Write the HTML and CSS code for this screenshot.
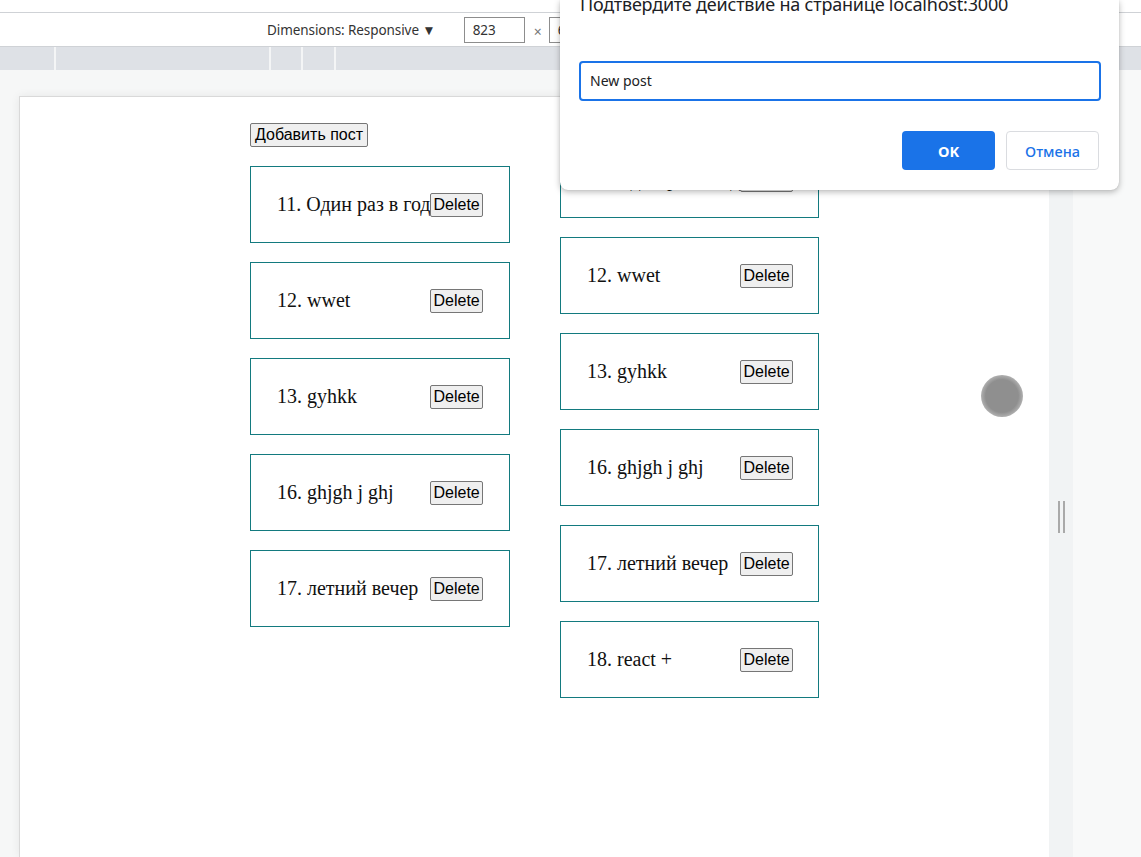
FILE: index.html
```html
<!DOCTYPE html>
<html lang="ru">
<head>
<meta charset="utf-8">
<title>Posts</title>
<link rel="stylesheet" href="styles.css">
</head>
<body>
<div class="devtools">
  <div class="topstrip"></div>
  <div class="toolbar">
    <span class="dim-label">Dimensions: Responsive ▼</span>
    <span class="dim-input">823</span>
    <span class="times">×</span>
    <span class="dim-input">653</span>
  </div>
  <div class="ruler">
    <span class="seg seg1"></span>
    <span class="seg seg2"></span>
    <span class="seg seg3"></span>
    <span class="seg seg4"></span>
    <span class="seg seg5"></span>
  </div>
  <div class="stage">
    <div class="frame">
      <div class="viewport">
        <div class="app">
          <div class="col">
            <button class="btn add-btn">Добавить пост</button>
            <div class="post"><span class="post-title">11. Один раз в год</span><button class="btn">Delete</button></div>
            <div class="post"><span class="post-title">12. wwet</span><button class="btn">Delete</button></div>
            <div class="post"><span class="post-title">13. gyhkk</span><button class="btn">Delete</button></div>
            <div class="post"><span class="post-title">16. ghjgh j ghj</span><button class="btn">Delete</button></div>
            <div class="post"><span class="post-title">17. летний вечер</span><button class="btn">Delete</button></div>
          </div>
          <div class="col col-right">
            <div class="post"><span class="post-title">11. Один раз в год</span><button class="btn">Delete</button></div>
            <div class="post"><span class="post-title">12. wwet</span><button class="btn">Delete</button></div>
            <div class="post"><span class="post-title">13. gyhkk</span><button class="btn">Delete</button></div>
            <div class="post"><span class="post-title">16. ghjgh j ghj</span><button class="btn">Delete</button></div>
            <div class="post"><span class="post-title">17. летний вечер</span><button class="btn">Delete</button></div>
            <div class="post"><span class="post-title">18. react +</span><button class="btn">Delete</button></div>
          </div>
        </div>
      </div>
    </div>
    <div class="resizer"><span class="grip"></span></div>
    <div class="side"></div>
  </div>
</div>
<div class="touch-dot"></div>
<div class="dialog">
  <div class="dlg-title">Подтвердите действие на странице localhost:3000</div>
  <div class="dlg-input">New post</div>
  <div class="dlg-actions">
    <button class="dlg-btn dlg-ok">OK</button>
    <button class="dlg-btn dlg-cancel">Отмена</button>
  </div>
</div>
</body>
</html>
```
FILE: styles.css
```css
html, body {
  margin: 0;
  padding: 0;
  height: 100%;
  overflow: hidden;
}
body {
  background: #f6f7f7;
  font-family: "Liberation Serif", "Times New Roman", serif;
}
.devtools {
  display: flex;
  flex-direction: column;
  height: 857px;
}
.topstrip {
  height: 12px;
  background: #ffffff;
}
.toolbar {
  height: 33px;
  background: #ffffff;
  border-top: 1px solid #cfd2d6;
  border-bottom: 1px solid #cfd2d6;
  display: flex;
  align-items: center;
  padding-left: 267px;
  font-family: "Noto Sans", "Open Sans", sans-serif;
  font-size: 13.5px;
  color: #333333;
}
.dim-label {
  margin-right: 28px;
  letter-spacing: -0.08px;
}
.dim-input {
  box-sizing: border-box;
  width: 61px;
  height: 26px;
  border: 1px solid #8d8d8d;
  padding-left: 8px;
  line-height: 24px;
  font-size: 13.5px;
}
.times {
  color: #777777;
  margin: 3px 7px 0 9px;
  font-size: 14px;
}
.ruler {
  height: 23px;
  background: #dee1e6;
  display: flex;
}
.seg {
  height: 100%;
  border-right: 2px solid #f4f5f6;
  box-sizing: border-box;
}
.seg1 { width: 56px; }
.seg2 { width: 215px; }
.seg3 { width: 32px; }
.seg4 { width: 33px; }
.seg5 { flex: 1; border-right: none; }
.stage {
  flex: 1;
  display: flex;
  min-height: 0;
}
.frame {
  width: 1049px;
  box-sizing: border-box;
  padding: 26px 0 0 19px;
  background: #f6f7f7;
}
.viewport {
  box-sizing: border-box;
  width: 1030px;
  height: 100%;
  background: #ffffff;
  border-top: 1px solid #d9d9d9;
  border-left: 1px solid #d9d9d9;
  box-shadow: 0 0 9px rgba(0, 0, 0, 0.07);
}
.app {
  display: flex;
  justify-content: center;
  align-items: flex-start;
  gap: 50px;
  padding-top: 26px;
}
.col {
  display: flex;
  flex-direction: column;
  align-items: flex-start;
  gap: 19px;
}
.col-right {
  padding-top: 18px;
}
.col-right .post {
  width: 259px;
}
.btn {
  font-family: "Liberation Sans", Arial, sans-serif;
  font-size: 16px;
  line-height: 18px;
  padding: 2px 2.5px;
  margin: 0;
  background: #efefef;
  border: 1px solid #767676;
  border-radius: 2px;
  color: #000000;
}
.add-btn {
  padding: 2px 4px;
}
.post {
  box-sizing: border-box;
  width: 260px;
  height: 77px;
  border: 1px solid #137a7f;
  padding: 0 0 0 26px;
  display: flex;
  align-items: center;
  color: #111111;
}
.post-title {
  flex: none;
  width: 153px;
  white-space: nowrap;
  font-size: 20px;
  line-height: 23px;
}
.resizer {
  width: 24px;
  background: #f1f3f4;
  padding-top: 431px;
  box-sizing: border-box;
}
.grip {
  display: block;
  margin-left: 9px;
  width: 3px;
  height: 32px;
  border-left: 2px solid #a9a9a9;
  border-right: 2px solid #a9a9a9;
}
.side {
  flex: 1;
  background: #f8f9f9;
}
.touch-dot {
  position: absolute;
  left: 981px;
  top: 375px;
  width: 42px;
  height: 42px;
  border-radius: 50%;
  background: radial-gradient(circle, #8f8f8f 0, #8f8f8f 55%, rgba(150, 150, 150, 0.6) 78%, rgba(170, 170, 170, 0) 100%);
}
.dialog {
  position: absolute;
  left: 560px;
  top: 0;
  width: 559px;
  height: 190px;
  box-sizing: border-box;
  padding: 0 18px 0 19px;
  background: #ffffff;
  border-radius: 0 0 8px 8px;
  box-shadow: 0 2px 6px rgba(0, 0, 0, 0.28), 0 0 1px rgba(0, 0, 0, 0.2);
  font-family: "Noto Sans", "Open Sans", sans-serif;
  color: #202124;
}
.dlg-title {
  margin-top: -9px;
  padding-left: 1px;
  height: 26px;
  font-size: 18px;
  line-height: 26px;
  white-space: nowrap;
  letter-spacing: -0.2px;
}
.dlg-input {
  margin-top: 44px;
  box-sizing: border-box;
  height: 40px;
  border: 2px solid #1a73e8;
  border-radius: 4px;
  padding-left: 9px;
  font-size: 14px;
  line-height: 36px;
  color: #202124;
}
.dlg-actions {
  margin-top: 30px;
  display: flex;
  justify-content: flex-end;
  gap: 11px;
  padding-right: 2px;
}
.dlg-btn {
  box-sizing: border-box;
  width: 93px;
  height: 39px;
  border-radius: 4px;
  font-family: "Noto Sans", "Open Sans", sans-serif;
  font-size: 14.5px;
  margin: 0;
}
.dlg-ok {
  background: #1a73e8;
  border: none;
  color: #ffffff;
  font-weight: 700;
}
.dlg-cancel {
  background: #ffffff;
  border: 1px solid #dadce0;
  color: #1a73e8;
  font-weight: 500;
}
```
